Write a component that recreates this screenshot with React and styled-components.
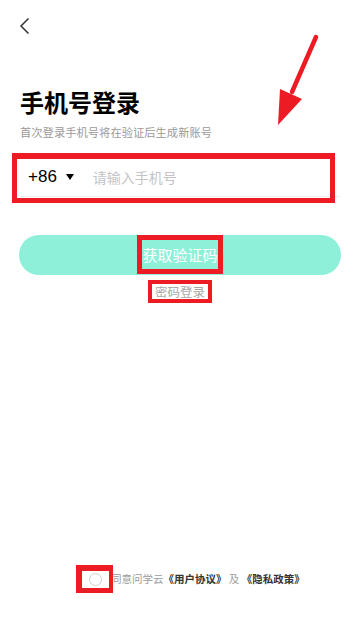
import styled, { createGlobalStyle } from "styled-components";

const GlobalStyle = createGlobalStyle`
  html, body {
    margin: 0;
    padding: 0;
    background: #fff;
  }
  body {
    font-family: "Noto Sans CJK SC", "Noto Sans", sans-serif;
  }
`;

const RED = "#ed1c24";

const Page = styled.div`
  position: relative;
  box-sizing: border-box;
  width: 360px;
  height: 621px;
  display: flex;
  flex-direction: column;
  padding: 0 19px 0 20px;
  overflow: hidden;
`;

const Back = styled.button`
  display: flex;
  align-items: center;
  justify-content: center;
  width: 20px;
  height: 24px;
  margin: 14px 0 0 -5px;
  padding: 0;
  border: none;
  background: none;
`;

const Title = styled.h1`
  margin: 48px 0 0;
  font-size: 24px;
  line-height: 32px;
  font-weight: 700;
  color: #000;
`;

const Subtitle = styled.p`
  margin: 6px 0 0;
  font-size: 11.3px;
  line-height: 16px;
  color: #9a9a9a;
  white-space: nowrap;
`;

const InputRow = styled.div`
  position: relative;
  display: flex;
  align-items: center;
  height: 38px;
  margin-top: 18px;
  padding-left: 8px;
  border-bottom: 1px solid #eeeeee;
`;

const Mark = styled.div`
  position: absolute;
  top: ${(p) => p.$top}px;
  left: ${(p) => p.$left}px;
  right: ${(p) => p.$right}px;
  bottom: ${(p) => p.$bottom}px;
  border: 5px solid ${RED};
  border-top-width: 6px;
  pointer-events: none;
`;

const Code = styled.span`
  font-family: "Liberation Sans", Arial, sans-serif;
  font-size: 17px;
  color: #000;
`;

const Caret = styled.span`
  width: 0;
  height: 0;
  margin-left: 9px;
  border-left: 4px solid transparent;
  border-right: 4px solid transparent;
  border-top: 6px solid #000;
`;

const Phone = styled.input`
  flex: 1;
  margin-left: 19px;
  border: none;
  outline: none;
  padding: 0;
  font-family: "Noto Sans CJK SC", sans-serif;
  font-size: 14px;
  background: transparent;
  &::placeholder {
    color: #c4c4c8;
  }
`;

const Submit = styled.button`
  display: flex;
  align-items: center;
  justify-content: center;
  height: 40px;
  margin: 38px 0 0 -1px;
  border: none;
  border-radius: 20px;
  background: #8ef0d8;
  padding: 0;
`;

const Boxed = styled.span`
  display: inline-block;
  border: ${(p) => p.$w}px solid ${RED};
  padding: ${(p) => p.$pad};
  font-size: ${(p) => p.$size}px;
  line-height: ${(p) => p.$lh}px;
  color: ${(p) => p.$color};
  font-family: "Noto Sans CJK SC", sans-serif;
  background: ${(p) => p.$bg || "transparent"};
  margin-top: ${(p) => p.$mt || 0}px;
`;

const LinkRow = styled.div`
  display: flex;
  justify-content: center;
  margin: 5px 0 0 -1px;
`;

const Footer = styled.div`
  display: flex;
  align-items: center;
  margin-top: auto;
  margin-bottom: 28px;
  padding-left: 56px;
`;

const CheckBox = styled.span`
  box-sizing: border-box;
  display: flex;
  align-items: center;
  justify-content: center;
  width: 37px;
  height: 28px;
  border: 6px solid ${RED};
  border-right-width: 4px;
  border-bottom-width: 5px;
  background: #fff;
  position: relative;
  z-index: 1;
`;

const Circle = styled.span`
  box-sizing: border-box;
  width: 13px;
  height: 13px;
  border-radius: 50%;
  border: 1px solid #cfcfcf;
`;

const Agree = styled.span`
  margin-left: -2px;
  font-size: 10.5px;
  line-height: 16px;
  color: #9a9a9a;
  white-space: nowrap;
`;

const Strong = styled.b`
  color: #333;
  font-weight: 600;
`;

const Arrow = styled.svg`
  position: absolute;
  left: 0;
  top: 0;
  pointer-events: none;
`;

export default function App() {
  return (
    <>
      <GlobalStyle />
      <Page>
        <Back aria-label="返回">
          <svg width="12" height="18" viewBox="0 0 12 18">
            <polyline
              points="9.5,1.5 2,9 9.5,16.5"
              fill="none"
              stroke="#333"
              strokeWidth="1.5"
            />
          </svg>
        </Back>
        <Title>手机号登录</Title>
        <Subtitle>首次登录手机号将在验证后生成新账号</Subtitle>

        <InputRow>
          <Code>+86</Code>
          <Caret />
          <Phone placeholder="请输入手机号" />
          <Mark $top={-5} $left={-8} $right={6} $bottom={-7} />
        </InputRow>

        <Submit>
          <Boxed $w={5} $pad="0 0.5px" $size={15} $lh={29} $color="#fff" $mt={-1}>
            获取验证码
          </Boxed>
        </Submit>

        <LinkRow>
          <Boxed $w={4} $pad="1px 3px" $size={12.5} $lh={13} $color="#a8a8a8" $bg="#fff">
            密码登录
          </Boxed>
        </LinkRow>

        <Footer>
          <CheckBox>
            <Circle />
          </CheckBox>
          <Agree>
            同意问学云<Strong>《用户协议》</Strong> 及 <Strong>《隐私政策》</Strong>
          </Agree>
        </Footer>

        <Arrow width="360" height="621" viewBox="0 0 360 621">
          <line
            x1="316"
            y1="37"
            x2="292"
            y2="92"
            stroke={RED}
            strokeWidth="4.5"
            strokeLinecap="round"
          />
          <polygon points="280,89 302,99 278,125" fill={RED} />
        </Arrow>
      </Page>
    </>
  );
}
